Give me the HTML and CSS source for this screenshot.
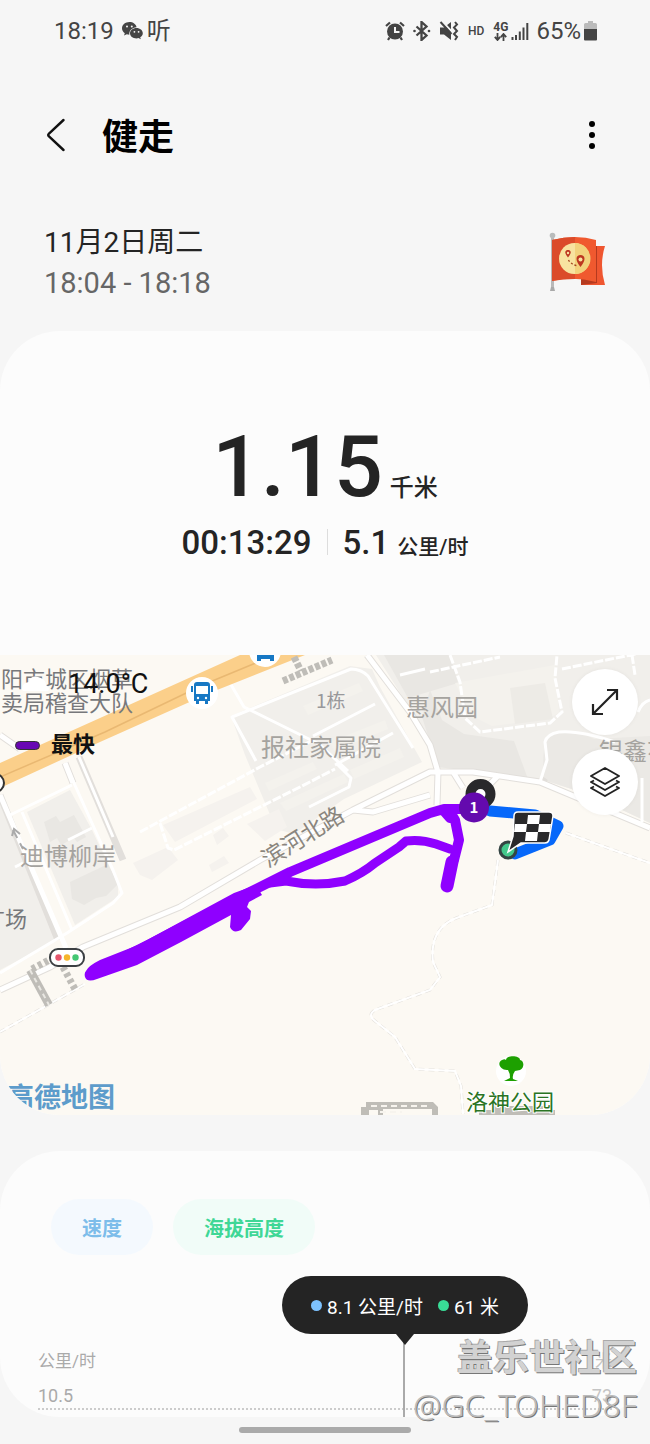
FILE: index.html
```html
<!DOCTYPE html>
<html lang="zh-CN">
<head>
<meta charset="utf-8">
<meta name="viewport" content="width=device-width, initial-scale=1">
<title>健走</title>
<link rel="stylesheet" href="styles.css">
</head>
<body>
<div class="status">
  <div class="status-group">
    <span class="clock">18:19</span>
    <svg class="wechat" width="21" height="18" viewBox="0 0 21 18"><path fill="#444" d="M7.500 0C3.300 0 0 2.800 0 6.300c0 2 1.100 3.700 2.800 4.900L2 13.500l2.800-1.300 2.500.5C7 8.500 10 5.500 14.600 5.200 14 2 11 0 7.500 0z"/><path fill="#444" d="M14.500 6C10.800 6 8 8.300 8 11.200s2.800 5.200 6.500 5.200l2-.3 2.300 1.200-.6-2c1.700-1 2.600-2.400 2.600-4.100C20.800 8.300 18 6 14.500 6z"/><g fill="#f6f6f6"><circle cx="5" cy="4.500" r="1"/><circle cx="9.800" cy="4.500" r="1"/><circle cx="12.400" cy="9.800" r=".9"/><circle cx="16.600" cy="9.800" r=".9"/></g></svg>
    <span class="listen">听</span>
  </div>
  <div class="status-group status-right">
    <svg width="20" height="20" viewBox="0 0 20 20"><circle cx="10" cy="10.500" r="8" fill="#444"/><path d="M10 6v5h4.500" fill="none" stroke="#f6f6f6" stroke-width="2"/><path d="M1 5l4-3.500M19 5l-4-3.500M4.500 16.500L3 19M15.500 16.500L17 19" stroke="#444" stroke-width="2.200"/></svg>
    <svg width="18" height="20" viewBox="0 0 18 20"><path d="M3.500 5.500l10 9-5 4.500V1l5 4.500-10 9" fill="none" stroke="#444" stroke-width="2.300"/><circle cx="1.500" cy="10" r="1.300" fill="#444"/><circle cx="16" cy="10" r="1.300" fill="#444"/></svg>
    <svg width="20" height="20" viewBox="0 0 20 20"><path d="M1 6.500h4l7-5.500v18l-7-5.500H1z" fill="#444"/><path d="M3 0l11 12" stroke="#f6f6f6" stroke-width="2"/><path d="M1.500 1l11 12" stroke="#444" stroke-width="2"/><path d="M16 1l2 2.500-3 3 3 3.500-3 3 3 3-2 3" fill="none" stroke="#444" stroke-width="2"/></svg>
    <span class="hd">HD</span>
    <span class="net">4G<svg width="13" height="8" viewBox="0 0 13 8"><path d="M3.500 0v6M.8 3.800L3.500 7l2.700-3.200M9.500 8V2M6.800 4.200L9.500 1l2.700 3.200" fill="none" stroke="#444" stroke-width="1.800"/></svg></span>
    <svg class="bars" width="18" height="17" viewBox="0 0 18 17"><path d="M1.500 17v-3M5 17v-5M8.800 17V8.500M12.500 17V4.500M16.300 17V0" stroke="#444" stroke-width="2"/></svg>
    <span class="clock">65%</span>
    <svg class="battery" width="13" height="20" viewBox="0 0 13 20"><path d="M4 0h5v2h2.500A1.500 1.500 0 0 1 13 3.500V9H0V3.500A1.500 1.500 0 0 1 1.500 2H4z" fill="#bbb"/><path d="M0 8h13v10.500a1 1 0 0 1-1 1H1a1 1 0 0 1-1-1z" fill="#444"/></svg>
  </div>
</div>

<header class="header">
  <button class="icon-btn" aria-label="返回"><svg width="20" height="36" viewBox="0 0 20 36"><path d="M17.500 3L3 16.500q-1.500 1.500 0 3L17.500 33" fill="none" stroke="#111" stroke-width="2.400" stroke-linecap="round"/></svg></button>
  <h1>健走</h1>
  <button class="icon-btn more" aria-label="更多"><svg width="8" height="30" viewBox="0 0 8 30"><circle cx="4" cy="4" r="3"/><circle cx="4" cy="15" r="3"/><circle cx="4" cy="26" r="3"/></svg></button>
</header>

<section class="session">
  <div>
    <div class="date">11月2日周二</div>
    <div class="span">18:04 - 18:18</div>
  </div>
  <svg width="56" height="60" viewBox="0 0 56 60">
    <path d="M32 53h24q-6-20 0-39H45v31H32z" fill="#ef5630"/><path d="M32 53v-7l13 2V14h3v37z" fill="#b53a1f"/>
    <rect x="2" y="6" width="3" height="50" fill="#b9b9b9"/><circle cx="3.500" cy="3.500" r="2.800" fill="#b9bcbc"/><path d="M1 59l1-4h3l1 4z" fill="#a9a9a9"/>
    <path d="M3 8Q27 2 47 8v42Q25 44 3 49z" fill="#f0592f"/><path d="M3 8q12-3 23-3v42q-12 0-23 2z" fill="#db4b2a"/>
    <circle cx="25.500" cy="26.500" r="15.500" fill="#f8e3a0"/><path d="M26 11a15.500 15.500 0 0 1 0 31z" fill="#f2d27c"/>
    <path d="M19 25.500c-5-6-2-7.500 0-7.500s5 1.500 0 7.500zM31.500 35c-6.500-8-4-12 0-12s6.500 4 0 12z" fill="#bd3720"/><circle cx="19" cy="21" r="1.200" fill="#f8e3a0"/><circle cx="31.500" cy="27.500" r="2" fill="#f8e3a0"/>
    <path d="M19.500 28q2 4 9 6" fill="none" stroke="#a34720" stroke-width="1.300" stroke-dasharray="2 2"/>
  </svg>
</section>

<main>
<section class="card workout">
  <div class="distance"><span class="big">1.15</span><span class="unit">千米</span></div>
  <div class="stats"><span class="num">00:13:29</span><span class="rule"></span><span class="num">5.1</span><span class="small">公里/时</span></div>
  <div class="map">
    <svg class="map-art" viewBox="0 655 650 460" role="img" aria-label="路线地图">
      <rect y="655" width="650" height="460" fill="#fcf9f3"/>
      <g fill="#f1efeb">
        <path d="M231 716L350 666l22 3 8 18 42 75-78 37-50 35-18-5-31-74z"/>
        <path d="M376 655h274v168l-60-28-50-16-67-10-33-1-8-25z"/>
        <path d="M0 800l57 140-57 30zM27 812l43-22 22 40 26 55v12l-43 28z"/>
        <path d="M163 825l87-38 7 12-82 43zM133 863l35-16 10 13-26 20-12-5zM213 835l10-7 6 8-12 9zM209 865l15-9 5 7-17 9zM247 824l32-15 8 18-22 14z" fill="#f5f2ee"/>
      </g>
      <path d="M544 780q-4-42 10-47 18-6 40 6l56-3v87l-60-28z" fill="#ebe9e5"/>
      <g fill="#e9e7e3"><path d="M430 690l12 30 22 14 50 7 14 38-90-12-16-50z"/><path d="M384 655h66l8 28-50 15z"/><path d="M44 822l12-6 4 6 14-7 12 22-9 5-3-4-13 7-4-7-7 4zM70 882l38-18 10 20-12 12-10 2-12 7-12-6z"/></g>
      <g fill="#f4f2ed"><path d="M303 706l56-23 4 8-55 24zM330 742l55-22 3 9-54 22zM265 783l48-21 4 7-48 22zM280 803l64-29 4 8-62 29zM350 770l50-22 4 9-50 22z"/><path d="M455 683l100-18 4 48-12 6-55 7-20-10z"/></g>
      <path d="M510 688l35-5 8 36-38 5z" fill="#edebe6"/>
      <g fill="none" stroke="#e2dfdb" stroke-width="7" stroke-linejoin="round"><path d="M0 990l50-23 33-20 97-40 80-47 93-50 77-38h43l67 10 110 46M353 810l20 2 57-17M367 655l43 57 20 33 8 27-1 33M453 772l10 16M498 776l-12 12M543 781l2-3"/><path d="M0 795l58 145M65 763l8 20M79 757l44 103M0 735l20 14"/></g>
      <g fill="none" stroke="#fff" stroke-width="5" stroke-linejoin="round"><path d="M0 990l50-23 33-20 97-40 80-47 93-50 77-38h43l67 10 110 46M353 810l20 2 57-17M367 655l43 57 20 33 8 27-1 33M453 772l10 16M498 776l-12 12"/><path d="M0 795l66 153M65 763l8 20M0 735l20 14"/></g>
      <g fill="none" stroke="#fff" stroke-width="3" stroke-linejoin="round"><path d="M65 763l48 107 9 23-9 10-46 30-67 40M79 757l34 80M10 815l62-30M22 812l50 118M68 840l24-12M15 867l8-4"/><path d="M256 761l-24-44 119-48q10 0 17 7l45 72M230 683l14 24q55 27 75 37l29 27M313 736l62-32M337 764l14 14-2 9-40 20M335 765l58-32"/><path d="M540 782l7-22-2-18q2-8 14-10 20-2 56 10M642 778v44M638 712q4-10 12-12M400 675l25-6"/></g>
      <g fill="none" stroke="#fff" stroke-width="3" stroke-dasharray="9 2"><path d="M140 832l120-65 55-28M160 823l8 25 6 2 126-63 35-18M430 672l70-15M450 655l10 27 5 36 15 14 70-9 12-11-7-34 2-23M562 669l88-18M632 655l3 20"/></g>
      <g fill="none" stroke="#e3e0db" stroke-width="3" stroke-dasharray="6 4"><path d="M498 860l-6 45-33 12q-30 10-26 45l7 15-10 13-55 20q-8 5 0 11l20 16 20 32 40 2 6 15 2 28M566 833l84 30M0 1032l85-48"/></g>
      <g fill="none" stroke="#fff" stroke-width="2"><path d="M498 860l-6 45-33 12q-30 10-26 45l7 15-10 13-55 20q-8 5 0 11l20 16 20 32 40 2 6 15 2 28M566 833l84 30M0 1032l85-48"/></g>
      <path d="M0 763L240 655h65L212 692 100 742 0 788z" fill="#fbcf8a"/><path d="M0 777L105 732 205 684 275 655" fill="none" stroke="#e9b872" stroke-width="1.500"/>
      <g fill="none" stroke="#bfbdb8" stroke-width="7"><path d="M283 681l49-21M294 657l7 14" stroke-dasharray="5 2"/><path d="M30 970l19 35" stroke-width="8"/><path d="M32 969l17-9M63 967l13 24" stroke-dasharray="4 3"/></g>
      <path d="M30 970l19 35" stroke="#e9e7e2" stroke-width="2" stroke-dasharray="5 4"/>
      <path d="M361 1115v-8h5v-5h67l5 5v8h-6v-6h-49v6h-5v-5h-9v5zM479 1115v-5h14v-4h50v4h12v5z" fill="#bfbdb7"/><path d="M371 1106h58M380 1112h22" stroke="#f7f4ee" stroke-width="2" stroke-dasharray="6 4"/>
      <path d="M13 830l10 19" stroke="#aaa" stroke-width="2" stroke-dasharray="9 6"/><path d="M12 836l2-7 6 5" fill="none" stroke="#aaa" stroke-width="2"/>
      <g class="place"><text x="1" y="687">阳市城区烟草</text><text x="1" y="711">卖局稽查大队</text><text x="-17" y="927">广场</text></g>
      <path d="M22 689q0-6 7-7 2-7 9-5 8 2 8 8 5 3 2 6H25q-3 0-3-2z" fill="#fff"/>
      <g class="area"><text x="20" y="865">迪博柳岸</text><text x="261" y="756">报社家属院</text><text x="406" y="716">惠风园</text><text x="599" y="760">银鑫花园</text></g>
      <text class="building" x="316" y="708">1栋</text>
      <text class="road" transform="translate(268 868) rotate(-32)">滨河北路</text>
      <g fill="#fff"><circle cx="202" cy="693" r="16"/><circle cx="265" cy="651" r="16"/></g>
      <g fill="#1778c4"><path d="M194 685q0-3 3-3h10q3 0 3 3v16h-2v3h-3v-3h-6v3h-3v-3h-2zM191 686h2v6h-2zM211 686h2v6h-2z"/><path d="M257 652h17v9h-4v-2h-9v2h-4z"/></g><path d="M196 686h12v8h-12z" fill="#fff"/><circle cx="198" cy="698" r="1.200" fill="#fff"/><circle cx="206" cy="698" r="1.200" fill="#fff"/>
      <circle cx="-5" cy="783" r="9" fill="#fff" stroke="#333" stroke-width="2"/>
      <g><rect x="50" y="949" width="34" height="17" rx="8" fill="#fff" stroke="#3c4043" stroke-width="2"/><circle cx="58.500" cy="957.500" r="3.200" fill="#e5566d"/><circle cx="67" cy="957.500" r="3.200" fill="#f5b52c"/><circle cx="75.500" cy="957.500" r="3.200" fill="#44c774"/></g>
      <path d="M490 811l45 4 23 11-8 14-35 14" fill="none" stroke="#0668fa" stroke-width="11" stroke-linejoin="round" stroke-linecap="round"/>
      <g fill="none" stroke="#8f00ff" stroke-linecap="round" stroke-linejoin="round"><path stroke-width="10" d="M92 973l58-29 90-47 50-25 140-59 14-4h25M449 810l6 10 4 20-5 20M443 810l7 8"/><path stroke-width="9" d="M270 883l16-2q30 6 59 0 18-8 30-18l24-16 7-6q15-2 30 3l14 5"/><path stroke-width="13" d="M447 886l5-24"/></g>
      <path d="M86 971q2-5 14-11l38-15 46-25 50-27 22-8 6 10-13 7-2 5 4 4-1 8-9 11q-8 4-11-3l1-12-50 27-44 23-40 14q-10 4-12-2-1-4 1-6z" fill="#8f00ff"/>
      <circle cx="480.500" cy="794" r="10" fill="#fff" stroke="#29292b" stroke-width="10"/><circle cx="474" cy="807.500" r="15" fill="#640aae"/><text class="km" x="474" y="813">1</text>
      <circle cx="508" cy="850" r="8" fill="#42c98b" stroke="#344543" stroke-width="3"/>
      <path d="M518 812h31q4 0 4 4l-4 24q-1 3-4 3h-24l-13 9 5-16 1-20q0-4 4-4z" fill="#29292b" stroke="#fff" stroke-width="1.500"/>
      <path d="M528 815h12l-1 9h12l-1 8h-12l-1 9h-12l1-9h-12l1-8h12zM527 824l-1 8h12l1-8z" fill="#fff" fill-rule="evenodd"/>
      <circle cx="511" cy="1071" r="15" fill="#fff"/><path d="M508 1070c-7 1-12-7-6-10 2-1 3-1 4 0 0-5 14-5 14 0 4 0 5 8 0 10l-5 1q-3 4-2 8l5 2h-14l6-3q0-5-2-8z" fill="#1da000"/>
      <text class="park" x="466" y="1110">洛神公园</text>
      <text class="brand" x="7" y="1107">高德地图</text>
    </svg>
    <div class="weather">14.0°C</div>
    <div class="legend"><i></i>最快</div>
    <div class="map-tools">
      <button aria-label="全屏"><svg width="28" height="28" viewBox="0 0 28 28"><path d="M2 26L26 2M16 2h10v10M2 16v10h10" fill="none" stroke="#222" stroke-width="2.200"/></svg></button>
      <button aria-label="图层"><svg width="30" height="30" viewBox="0 0 30 30"><g fill="none" stroke="#222" stroke-width="1.900" stroke-linejoin="round"><path d="M15 1l14 8-14 8L1 9zM4 13.500L1 15l14 8 14-8-3-1.500M4 19.500L1 21l14 8 14-8-3-1.500"/></g></svg></button>
    </div>
  </div>
</section>

<section class="card chart-card">
  <div class="tabs"><button class="tab speed">速度</button><button class="tab height">海拔高度</button></div>
  <div class="chart">
    <div class="axis"><span>公里/时</span><span class="faint">米</span></div>
    <div class="axis ticks"><span>10.5</span><span class="faint">73</span></div>
    <div class="cursor"><div class="tip"><i class="dot blue"></i><span>8.1 公里/时</span><i class="dot green"></i><span>61 米</span></div></div>
  </div>
</section>
</main>
<footer class="home"><div class="handle"></div></footer>
<div class="watermark"><div class="wm-name">盖乐世社区</div><div class="wm-user">@GC_TOHED8F</div></div>
</body>
</html>
```

FILE: styles.css
```css
* { box-sizing: border-box; }
body { margin: 0; position: relative; background: #f6f6f6; color: #242424; font-family: Roboto, "Noto Sans CJK SC", sans-serif; }
button { border: 0; padding: 0; background: none; font: inherit; color: inherit; cursor: pointer; }
svg { display: block; }

.status { display: flex; justify-content: space-between; align-items: center; height: 62px; padding: 0 53px 0 54px; color: #444; }
.status-group { display: flex; align-items: center; gap: 8px; }
.clock { font-size: 24px; line-height: 28px; }
.listen { font-size: 24px; line-height: 28px; margin-left: -4px; }
.status-right { gap: 8px; }
.hd { font-size: 12px; font-weight: 500; margin: 0 1px; }
.net { display: flex; flex-direction: column; align-items: center; font-size: 12px; line-height: 11px; font-weight: 700; }
.bars { margin-left: -5px; }
.status-right .clock { margin-left: -1px; }
.battery { margin-left: -5px; }

.header { display: flex; align-items: center; height: 146px; padding: 0 54px 0 46px; }
.header h1 { flex: 1; margin: 0 0 0 36px; padding-top: 6px; font-size: 36px; line-height: 44px; font-weight: 700; color: #000; }
.icon-btn { display: flex; }

.session { display: flex; justify-content: space-between; align-items: center; height: 123px; padding: 0 45px 15px 44px; }
.date { padding-top: 2px; font-size: 28px; line-height: 40px; }
.span { font-size: 29px; line-height: 40px; color: #666; }

.card { background: #fcfcfc; border-radius: 60px; overflow: hidden; }
.workout { padding-top: 86px; }
.distance { display: flex; justify-content: center; align-items: baseline; gap: 7px; font-weight: 500; }
.big { font-size: 86px; line-height: 100px; }
.unit { font-size: 24px; }
.stats { display: flex; justify-content: center; align-items: baseline; height: 138px; padding-top: 6px; font-weight: 500; }
.num { font-size: 33px; line-height: 40px; }
.rule { align-self: flex-start; width: 1px; height: 26px; margin: 6px 15px 0; background: #ddd; }
.small { font-size: 21px; margin-left: 8px; }

.map { position: relative; }
.map-art { width: 100%; height: auto; }
.map-art text { font-family: "Noto Sans CJK SC", sans-serif; }
.place { font-size: 22px; fill: #77787b; }
.area { font-size: 24px; fill: #a5a39f; }
.building { font-size: 19px; fill: #98989b; }
.road { font-size: 23px; fill: #8a867e; }
.park { font-size: 22px; fill: #2a7424; stroke: #fff; stroke-width: 2px; paint-order: stroke; }
.brand { font-size: 27px; font-weight: 700; fill: #5d9ccb; }
.km { font-size: 15px; font-weight: 700; fill: #fff; text-anchor: middle; }
.weather { position: absolute; left: 68px; top: 12px; font-size: 27px; line-height: 34px; color: #111; }
.legend { position: absolute; left: 15px; top: 75px; display: flex; align-items: center; gap: 11px; font-size: 22px; line-height: 30px; font-weight: 700; color: #111; }
.legend i { width: 25px; height: 9px; border: 1px solid #333; border-radius: 5px; background: #6807b3; }
.map-tools { position: absolute; right: 12px; top: 14px; display: grid; gap: 14px; }
.map-tools button { display: grid; place-items: center; width: 66px; height: 66px; border-radius: 50%; background: #fff; box-shadow: 0 0 4px #0000000d; }

.chart-card { margin-top: 36px; padding-top: 48px; }
.tabs { display: flex; gap: 20px; padding: 0 51px; }
.tab { height: 56px; padding: 0 31px; border-radius: 28px; font-size: 20px; font-weight: 700; }
.speed { color: #7dbdea; background: #f4f9fe; }
.height { color: #3fd796; background: #f1fcf8; }
.chart { position: relative; padding: 91px 38px 7px; color: #aaa; }
.axis { display: flex; justify-content: space-between; font-size: 17px; line-height: 30px; }
.ticks { font-size: 18px; line-height: 24px; padding: 8px 0 0; border-bottom: 2px dotted #ccc; }
.faint { color: #c4c4c4; }
.cursor { position: absolute; left: 62%; top: 79px; bottom: 0; border-left: 2px solid #aaa; }
.tip { position: absolute; left: 0; bottom: 100%; transform: translateX(-50%); display: flex; align-items: center; height: 58px; padding: 0 29px; border-radius: 29px; background: #242424; color: #fff; font-size: 19px; white-space: nowrap; }
.tip::after { content: ""; position: absolute; left: 50%; top: 100%; transform: translateX(-50%); border: 9px solid transparent; border-top: 11px solid #242424; border-bottom: 0; }
.dot { width: 11px; height: 11px; margin-right: 5px; border-radius: 50%; }
.blue { background: #7dc2ff; }
.green { background: #39dc97; margin-left: 15px; }

.home { display: flex; justify-content: center; padding: 10px 0 11px; }
.handle { width: 172px; height: 6px; border-radius: 3px; background: #aaa; }

.watermark { position: absolute; right: 13px; bottom: 16px; text-align: right; pointer-events: none; }
.wm-name { font-size: 36px; line-height: 46px; font-weight: 700; color: #d2d2d2; text-shadow: 1px 1px #777, -1px -1px #aaa; }
.wm-user { font-family: "Noto Sans", sans-serif; font-size: 32px; line-height: 46px; font-weight: 300; color: #bbb; text-shadow: 1px 1px #777; }
```
